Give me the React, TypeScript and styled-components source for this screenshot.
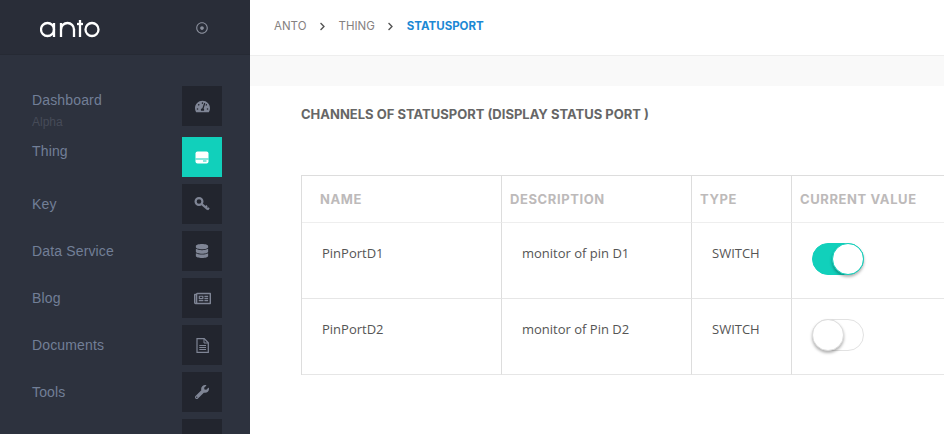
import React from 'react'
import styled, { createGlobalStyle } from 'styled-components'
import {
    FaChevronRight,
    FaDatabase,
    FaRegDotCircle,
    FaRegNewspaper,
    FaTachometerAlt,
    FaWrench,
} from 'react-icons/fa'

const headingFont = `Inter, "Liberation Sans", sans-serif`
const bodyFont = `"Open Sans", "Liberation Sans", sans-serif`

const GlobalStyle = createGlobalStyle`
    html, body {
        margin: 0;
        height: 100%;
        overflow: hidden;
        background: #fff;
    }
    #root {
        height: 100%;
    }
`

const Page = styled.div`
    display: flex;
    height: 434px;
    width: 944px;
    overflow: hidden;
`

const Sidebar = styled.aside`
    flex: 0 0 250px;
    background-color: #2d323e;
    overflow: hidden;
`

const SidebarHeader = styled.div`
    height: 55px;
    box-sizing: border-box;
    display: flex;
    align-items: center;
    justify-content: space-between;
    padding: 0 42px 0 40px;
    background-color: #292d38;
    border-bottom: 1px solid #262a34;
`

const Logo = styled.svg`
    display: block;
    width: 60px;
    height: 20px;
    margin-top: 4px;
`

const PinButton = styled.span`
    display: flex;
    color: #8a8f9c;
    font-size: 12px;
    margin-top: 1px;
`

const Menu = styled.nav`
    padding: 31px 28px 0 32px;
`

const MenuItem = styled.div<{ $gap?: number }>`
    display: flex;
    justify-content: space-between;
    height: 40px;
    margin-bottom: ${(p) => p.$gap ?? 7}px;
`

const MenuText = styled.div<{ $top?: boolean }>`
    display: flex;
    flex-direction: column;
    justify-content: ${(p) => (p.$top ? 'flex-start' : 'center')};
    padding-top: ${(p) => (p.$top ? 6 : 0)}px;
    font-family: "Liberation Sans", Arial, sans-serif;
`

const MenuLabel = styled.span`
    font-size: 14px;
    line-height: 16px;
    letter-spacing: 0.15px;
    color: #727f97;
`

const MenuNote = styled.span`
    margin-top: 7px;
    font-size: 12px;
    line-height: 14px;
    color: #464b58;
`

const IconTile = styled.div<{ $active?: boolean; $size?: number }>`
    flex: 0 0 40px;
    height: 40px;
    display: flex;
    align-items: center;
    justify-content: center;
    font-size: ${(p) => p.$size ?? 15}px;
    background-color: ${(p) => (p.$active ? '#11d0bb' : '#22252e')};
    color: ${(p) => (p.$active ? '#fff' : '#7f8595')};
`

const Main = styled.main`
    flex: 1;
    min-width: 0;
    overflow: hidden;
`

const Breadcrumb = styled.div`
    height: 56px;
    box-sizing: border-box;
    display: flex;
    align-items: center;
    padding: 0 0 3px 24px;
    border-bottom: 1px solid #eee;
    font-family: ${headingFont};
    font-size: 11.5px;
    color: #85817f;
`

const Crumb = styled.span<{ $current?: boolean }>`
    font-weight: ${(p) => (p.$current ? 700 : 400)};
    color: ${(p) => (p.$current ? '#1c88d4' : '#85817f')};
`

const CrumbArrow = styled(FaChevronRight)`
    margin: 0 11.5px;
    font-size: 9px;
    color: #555;
`

const Strip = styled.div`
    height: 30px;
    background-color: #f9f9f9;
`

const Content = styled.section`
    padding: 20px 0 0 51px;
`

const Title = styled.h2`
    margin: 0 0 52px;
    font-family: ${headingFont};
    font-size: 13px;
    line-height: 17px;
    font-weight: 700;
    color: #666;
    white-space: nowrap;
`

const Table = styled.div`
    display: grid;
    grid-template-columns: 200px 190px 100px 300px;
    grid-auto-rows: auto;
    width: 790px;
    border-top: 1px solid #ddd;
    border-left: 1px solid #ddd;
`

const HeadCell = styled.div<{ $wide?: boolean }>`
    height: 47px;
    box-sizing: border-box;
    display: flex;
    align-items: center;
    padding-left: ${(p) => (p.$wide ? 18 : 8)}px;
    border-right: 1px solid #ddd;
    border-bottom: 1px solid #eee;
    font-family: ${headingFont};
    font-size: 13px;
    font-weight: 700;
    letter-spacing: 0.6px;
    color: #bdbaba;
    white-space: nowrap;
`

const Cell = styled.div`
    height: 76px;
    box-sizing: border-box;
    padding: 20px 0 0 20px;
    border-right: 1px solid #ddd;
    border-bottom: 1px solid #e6e6e6;
    font-family: ${bodyFont};
    font-size: 13px;
    line-height: 21px;
    color: #555;
`

const Switch = styled.div<{ $on?: boolean }>`
    position: relative;
    width: 52px;
    height: 32px;
    box-sizing: border-box;
    border-radius: 16px;
    background-color: ${(p) => (p.$on ? '#11d0bb' : '#fff')};
    border: 1px solid ${(p) => (p.$on ? '#11d0bb' : '#e2e2e2')};
`

const Knob = styled.span<{ $on?: boolean }>`
    position: absolute;
    top: -1px;
    left: ${(p) => (p.$on ? 19 : -1)}px;
    width: 32px;
    height: 32px;
    box-sizing: border-box;
    border-radius: 50%;
    background-color: #fff;
    border: 1px solid ${(p) => (p.$on ? '#11d0bb' : '#ddd')};
    box-shadow: 0 2px 3px rgba(0, 0, 0, 0.3);
`

const HddIcon = () => (
    <svg width="14" height="13" viewBox="0 0 14 13">
        <rect x="0.5" y="0.5" width="13" height="12" rx="2" fill="currentColor" />
        <rect x="0.5" y="7.5" width="13" height="1" fill="#11d0bb" />
        <rect x="8" y="9.5" width="3.5" height="1" fill="#11d0bb" />
    </svg>
)

const KeyIcon = () => (
    <svg width="16" height="16" viewBox="0 0 16 16" fill="none" stroke="currentColor">
        <circle cx="5" cy="5.5" r="3.4" strokeWidth="2.2" />
        <path d="M7.6 8 14 13.4" strokeWidth="2.2" />
        <path d="M11.3 11.6l1.7-2M13.6 13.6l1.4-1.8" strokeWidth="1.8" />
    </svg>
)

const FileIcon = () => (
    <svg width="13" height="15" viewBox="0 0 13 15" fill="none" stroke="currentColor">
        <path d="M1 .7h7.2L12.3 4.8v9.5H1z" strokeWidth="1.2" />
        <path d="M8 .8v4.2h4.2M3.3 7.5h6.7M3.3 9.5h6.7M3.3 11.5h6.7" strokeWidth="1" />
    </svg>
)

const menu = [
    { label: 'Dashboard', note: 'Alpha', icon: <FaTachometerAlt />, top: true, gap: 11 },
    { label: 'Thing', icon: <HddIcon />, top: true, active: true },
    { label: 'Key', icon: <KeyIcon /> },
    { label: 'Data Service', icon: <FaDatabase />, size: 14 },
    { label: 'Blog', icon: <FaRegNewspaper />, size: 17 },
    { label: 'Documents', icon: <FileIcon /> },
    { label: 'Tools', icon: <FaWrench />, size: 14 },
    { label: '', icon: null },
]

const channels = [
    { name: 'PinPortD1', description: 'monitor of pin D1', type: 'SWITCH', on: true },
    { name: 'PinPortD2', description: 'monitor of Pin D2', type: 'SWITCH', on: false },
]

const App: React.FC = () => {
    return (
        <Page>
            <GlobalStyle />
            <Sidebar>
                <SidebarHeader>
                    <Logo viewBox="0 0 60 20" role="img" aria-label="anto" fill="none" stroke="#fff" strokeWidth="2.3">
                        <circle cx="7.5" cy="10.5" r="6.5" />
                        <line x1="14" y1="4" x2="14" y2="18" />
                        <line x1="21" y1="4" x2="21" y2="18" />
                        <circle cx="27.5" cy="10.5" r="6.5" strokeDasharray="20.42 20.42" transform="rotate(180 27.5 10.5)" />
                        <line x1="34" y1="10.5" x2="34" y2="18" />
                        <line x1="40" y1="1" x2="40" y2="18" />
                        <line x1="37" y1="5" x2="43" y2="5" />
                        <circle cx="52" cy="10.5" r="6.5" />
                    </Logo>
                    <PinButton>
                        <FaRegDotCircle />
                    </PinButton>
                </SidebarHeader>
                <Menu>
                    {menu.map((item, i) => (
                        <MenuItem key={i} $gap={item.gap}>
                            <MenuText $top={item.top}>
                                <MenuLabel>{item.label}</MenuLabel>
                                {item.note && <MenuNote>{item.note}</MenuNote>}
                            </MenuText>
                            <IconTile $active={item.active} $size={item.size}>{item.icon}</IconTile>
                        </MenuItem>
                    ))}
                </Menu>
            </Sidebar>
            <Main>
                <Breadcrumb>
                    <Crumb>ANTO</Crumb>
                    <CrumbArrow />
                    <Crumb>THING</Crumb>
                    <CrumbArrow />
                    <Crumb $current>STATUSPORT</Crumb>
                </Breadcrumb>
                <Strip />
                <Content>
                    <Title>CHANNELS OF STATUSPORT (DISPLAY STATUS PORT )</Title>
                    <Table>
                        <HeadCell $wide>NAME</HeadCell>
                        <HeadCell>DESCRIPTION</HeadCell>
                        <HeadCell>TYPE</HeadCell>
                        <HeadCell>CURRENT VALUE</HeadCell>
                        {channels.map((c) => (
                            <React.Fragment key={c.name}>
                                <Cell>{c.name}</Cell>
                                <Cell>{c.description}</Cell>
                                <Cell>{c.type}</Cell>
                                <Cell>
                                    <Switch $on={c.on}>
                                        <Knob $on={c.on} />
                                    </Switch>
                                </Cell>
                            </React.Fragment>
                        ))}
                    </Table>
                </Content>
            </Main>
        </Page>
    )
}

export default App
